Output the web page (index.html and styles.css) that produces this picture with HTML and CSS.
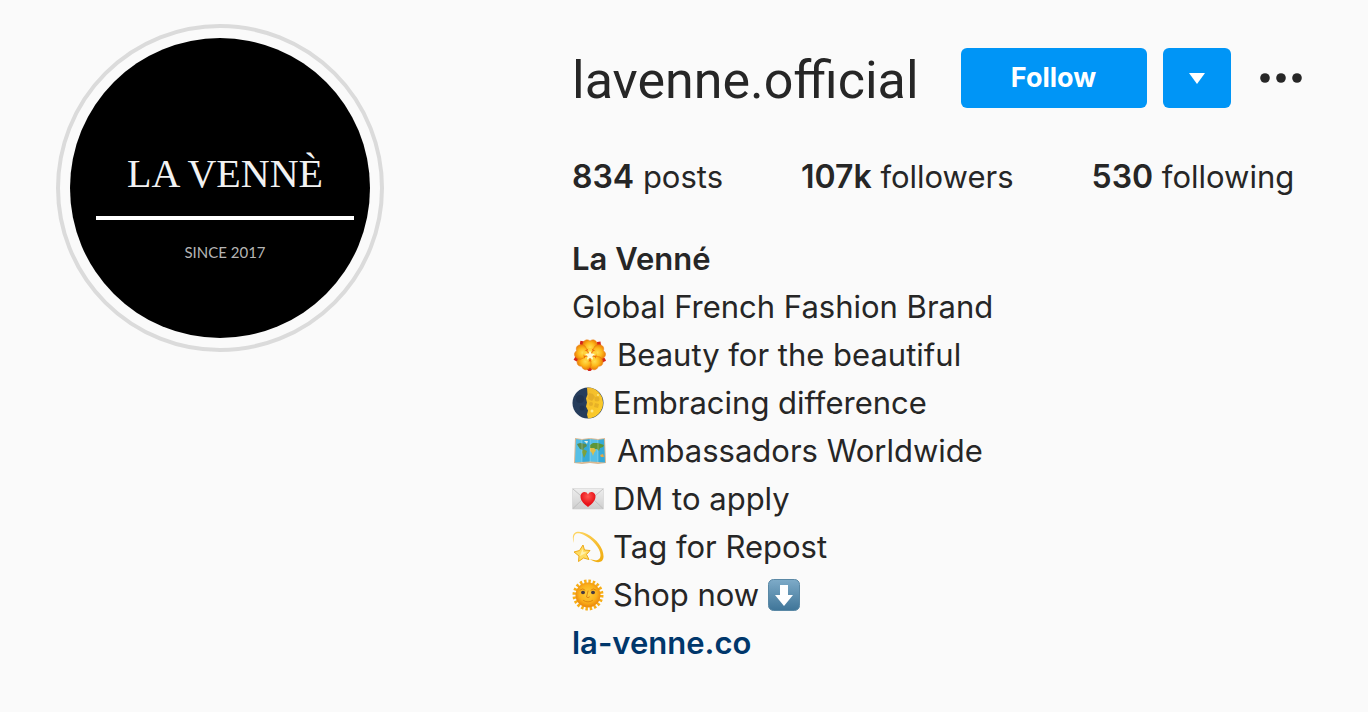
FILE: index.html
```html
<!DOCTYPE html>
<html lang="en">
<head>
<meta charset="utf-8">
<meta name="viewport" content="width=device-width, initial-scale=1">
<title>La Venné (lavenne.official)</title>
<link rel="stylesheet" href="styles.css">
</head>
<body>
<main class="profile">
  <div class="avatar">
    <div class="avatar-disc">
      <span class="brand">LA VENNÈ</span>
      <span class="rule"></span>
      <span class="since">SINCE 2017</span>
    </div>
  </div>
  <section class="details">
    <header class="top">
      <h1 class="username">lavenne.official</h1>
      <div class="actions">
        <button class="btn follow" type="button">Follow</button>
        <button class="btn suggest" type="button" aria-label="Suggested accounts"><svg width="16" height="11" viewBox="0 0 16 11"><path d="M0 0h16L8 11z" fill="#fff"/></svg></button>
      </div>
      <button class="more" type="button" aria-label="Options"><svg width="44" height="12" viewBox="0 0 44 12" fill="#262626"><circle cx="6" cy="6" r="4.8"/><circle cx="22" cy="6" r="4.8"/><circle cx="38" cy="6" r="4.8"/></svg></button>
    </header>
    <ul class="stats">
      <li><b>834</b> posts</li>
      <li><b>107k</b> followers</li>
      <li><b>530</b> following</li>
    </ul>
    <div class="bio">
      <h2 class="name">La Venné</h2>
      <p>Global French Fashion Brand</p>
      <p class="item">
        <svg class="emoji wide" viewBox="0 0 32 32" aria-hidden="true">
          <defs>
            <radialGradient id="petal"><stop offset="0" stop-color="#ffdf55"/><stop offset=".6" stop-color="#fdba1c"/><stop offset="1" stop-color="#f08c0c"/></radialGradient>
          </defs>
          <g fill="#d4261b"><path id="leaf" d="M20 10.500 23 3l3.500-.5.5 4z"/><use href="#leaf" transform="rotate(72 16 16)"/><use href="#leaf" transform="rotate(144 16 16)"/><use href="#leaf" transform="rotate(216 16 16)"/><use href="#leaf" transform="rotate(288 16 16)"/></g>
          <g fill="url(#petal)" stroke="#e8780c" stroke-width=".5"><path id="pt" d="M16 16 9 8.500C8 4 10 1 13 .8q2 .2 3 1.200 1-1 3-1.200C22 1 24 4 23 8.500z"/><use href="#pt" transform="rotate(72 16 16)"/><use href="#pt" transform="rotate(144 16 16)"/><use href="#pt" transform="rotate(216 16 16)"/><use href="#pt" transform="rotate(288 16 16)"/></g>
          <circle cx="16" cy="16" r="6.500" fill="#ee6b0b"/>
          <g fill="#ffd33d"><circle cx="16" cy="11.500" r="2.400"/><circle cx="20.500" cy="14.500" r="2.400"/><circle cx="19" cy="20" r="2.400"/><circle cx="13" cy="20" r="2.400"/><circle cx="11.500" cy="14.500" r="2.400"/></g>
          <path d="m16 11.500 1.500 3 3.500.4-2.600 2.300.7 3.500-3.100-1.800-3.100 1.800.7-3.500-2.600-2.300 3.500-.4z" fill="#fffbd6"/>
        </svg>
        <span>Beauty for the beautiful</span>
      </p>
      <p class="item">
        <svg class="emoji" viewBox="0 0 32 32" aria-hidden="true">
          <defs><linearGradient id="moon" x2="1" y2="1"><stop offset="0" stop-color="#f0b92c"/><stop offset="1" stop-color="#ffd02a"/></linearGradient></defs>
          <circle cx="16" cy="16" r="15.500" fill="#263d5c"/>
          <path d="M15 .5A15.500 15.500 0 0 1 16 31.500l-1-4 1-4-2-4 1-4-1-4 1.500-4z" fill="url(#moon)"/>
          <g fill="#d59d26" opacity=".5"><path d="M17 6l4 1 2 3-3 4-4-2z"/><circle cx="25" cy="12" r="2.500"/><circle cx="19" cy="17" r="2"/><path d="M23 16l4 1-1 4-4-1z"/></g>
          <g fill="#1b2d47" opacity=".5"><circle cx="8" cy="12" r="4"/><circle cx="10" cy="21" r="2.500"/></g>
          <g fill="#ffe98a"><circle cx="20" cy="24" r="1.500"/><circle cx="26" cy="8" r="1"/></g>
        </svg>
        <span>Embracing difference</span>
      </p>
      <p class="item">
        <svg class="emoji wide" viewBox="0 0 32 32" aria-hidden="true">
          <path d="M1 3l7 1 8-1 8 1 7-1 1 25-8 1-8-1-8 1-8-1z" fill="#d8b892"/>
          <path d="M2 4l6 1v22l-7 .5zM16 4l8 1v22l-8-.5z" fill="#55bfe6"/><path d="M8 5l8-1v22.500l-8 .5zM24 5l6-1 1 23.500-7-.5z" fill="#36aad8"/>
          <path d="M3 9l3-1 6 1 1 2-3 2-1 2-3-1-2-3z" fill="#5b8d4d"/>
          <path d="M9 14l4 2-1 3-2 4-1-3-1-3z" fill="#7ca13c"/>
          <path d="M10 6h4l-1 3z" fill="#e6eedf"/>
          <path d="M16 10l3-2 5 0 6 2-1 2-3 1-1 3-2-2-2 0-2-1-3 0z" fill="#5c9637"/>
          <path d="M16 13l4 0 2 2-2 3-1 3-1-3-2-2z" fill="#dfbd46"/><path d="M26 20l3-1 1 3-3 0z" fill="#e6a745"/>
          <path d="M8 4v24M16 3v24M24 4v24" stroke="#fff" stroke-opacity=".25" fill="none"/>
        </svg>
        <span>Ambassadors Worldwide</span>
      </p>
      <p class="item">
        <svg class="emoji" viewBox="0 0 32 32" aria-hidden="true">
          <defs><linearGradient id="paper" x2="0" y2="1"><stop offset="0" stop-color="#eee"/><stop offset="1" stop-color="#cecece"/></linearGradient><radialGradient id="heart" cy=".3"><stop offset="0" stop-color="#ff5750"/><stop offset="1" stop-color="#e8131a"/></radialGradient></defs>
          <path d="M.5 5.500h31v20.500H.5z" fill="url(#paper)" stroke="#d2d2d2" stroke-width=".6"/>
          <path d="M1 25.500 12 15M31 25.500 20 15M1 6l15 13L31 6" fill="none" stroke="#b9b9b9" stroke-width=".8"/>
          <path d="M16 24C12 21 8.500 17.500 8.500 13.500c0-5 6-6 7.500-2 1.500-4 7.500-3 7.500 2C23.500 17.500 20 21 16 24z" fill="url(#heart)"/>
        </svg>
        <span>DM to apply</span>
      </p>
      <p class="item">
        <svg class="emoji" viewBox="0 0 32 32" aria-hidden="true">
          <defs><linearGradient id="trail" x2="1" y2="1"><stop offset="0" stop-color="#ffd867"/><stop offset="1" stop-color="#f0ab0c"/></linearGradient></defs>
          <path d="M2 12C-2 1 5-2 15 3c10 5 17 15 16.500 23-.5 7-8 6-14 2 6 2 11 2 11-4C28.500 17 20 8 12 4 5 .5.5 2 2 12z" fill="url(#trail)"/>
          <path d="m11 14 1.500 5 5.500.5-3.500 4 2.500 5-5.500-1.500-5 3.500.5-5.500L2 21l5.500-1.500z" fill="#ffdc62" stroke="#edaa19" stroke-linejoin="round"/>
          <path d="m10.500 18 .8 3 3.200.5-3.500 2-3 1.500 1-3z" fill="#fff2ac"/>
        </svg>
        <span>Tag for Repost</span>
      </p>
      <p class="item">
        <svg class="emoji" viewBox="0 0 32 32" aria-hidden="true">
          <defs><radialGradient id="sun" cy=".45"><stop offset="0" stop-color="#ffcf3b"/><stop offset=".7" stop-color="#fbb11c"/><stop offset="1" stop-color="#ee8f0e"/></radialGradient></defs>
          <circle cx="16" cy="16" r="13.500" fill="none" stroke="#f7ae16" stroke-width="4" stroke-dasharray="2.400 1.840"/>
          <circle cx="16" cy="16" r="12.500" fill="url(#sun)"/>
          <ellipse cx="11" cy="13.500" rx="2" ry="1.700" fill="#483b43"/><ellipse cx="21" cy="13.500" rx="2" ry="1.700" fill="#483b43"/>
          <path d="M8 11q3-2.500 5 0M19 11q2-2.500 5 0M16 12l-1.500 6q1.500 1.500 3 0M11.500 21.500q4.500 3 9 0" fill="none" stroke="#dd8710" stroke-width="1" stroke-linecap="round"/>
        </svg>
        <span>Shop now</span>
        <svg class="emoji" viewBox="0 0 32 32" aria-hidden="true">
          <defs><linearGradient id="tile" x2="0" y2="1"><stop offset="0" stop-color="#7eabc8"/><stop offset="1" stop-color="#3f7598"/></linearGradient></defs>
          <rect x=".5" y=".5" width="31" height="31" rx="5" fill="url(#tile)" stroke="#5a88a5"/>
          <path d="M12 6h8v10h5l-9 11-9-11h5z" fill="#fff"/>
        </svg>
      </p>
      <a class="site" href="https://la-venne.co">la-venne.co</a>
    </div>
  </section>
</main>
</body>
</html>
```
FILE: styles.css
```css
* { box-sizing: border-box; }

body {
  margin: 0;
  background: #fafafa;
  color: #262626;
  font-family: Inter, "Open Sans", sans-serif;
  font-size: 31px;
  line-height: 48px;
}

h1, h2, p, ul { margin: 0; padding: 0; }
b { font-size: 32px; font-weight: 600; }

.profile {
  display: flex;
  align-items: flex-start;
  gap: 188px;
  padding: 24px 56px 44px;
}

.avatar {
  flex: none;
  padding: 10px;
  border: 4px solid #dbdbdb;
  border-radius: 50%;
}

.avatar-disc {
  display: flex;
  flex-direction: column;
  align-items: center;
  width: 300px;
  height: 300px;
  padding: 112px 16px 0 26px;
  border-radius: 50%;
  background: #000;
  color: #f2f2f2;
}

.brand {
  font-family: "Liberation Serif", serif;
  font-size: 40px;
  white-space: nowrap;
}

.rule {
  width: 100%;
  height: 4px;
  margin: 18px 0 20px;
  background: #fff;
}

.since {
  font-family: Lato, sans-serif;
  font-size: 15px;
  line-height: 24px;
  color: #b5b5b5;
}

.details { flex: 1; min-width: 0; padding-top: 24px; }

.top {
  display: flex;
  align-items: center;
}

.username {
  padding-top: 6px;
  font-family: Roboto, sans-serif;
  font-size: 52px;
  font-weight: 400;
  line-height: 54px;
  margin-right: 42px;
}

.actions { display: flex; gap: 16px; }

button {
  display: flex;
  align-items: center;
  justify-content: center;
  padding: 0;
  border: 0;
  background: none;
  font: inherit;
  cursor: pointer;
}

.btn {
  height: 60px;
  border-radius: 6px;
  background: #0095f6;
  color: #fff;
}

.follow {
  width: 186px;
  font-size: 27px;
  font-weight: 700;
}

.suggest { width: 68px; }
.more { margin-left: 28px; height: 60px; }

.stats {
  display: flex;
  gap: 78px;
  margin: 45px 0 34px;
  list-style: none;
  white-space: nowrap;
}

.name { font-size: 31px; font-weight: 600; }

.item {
  display: flex;
  align-items: center;
  gap: 9px;
}

.emoji { flex: none; width: 32px; height: 32px; }
.wide { width: 36px; }

.site {
  color: #00376b;
  font-weight: 600;
  text-decoration: none;
}
```
